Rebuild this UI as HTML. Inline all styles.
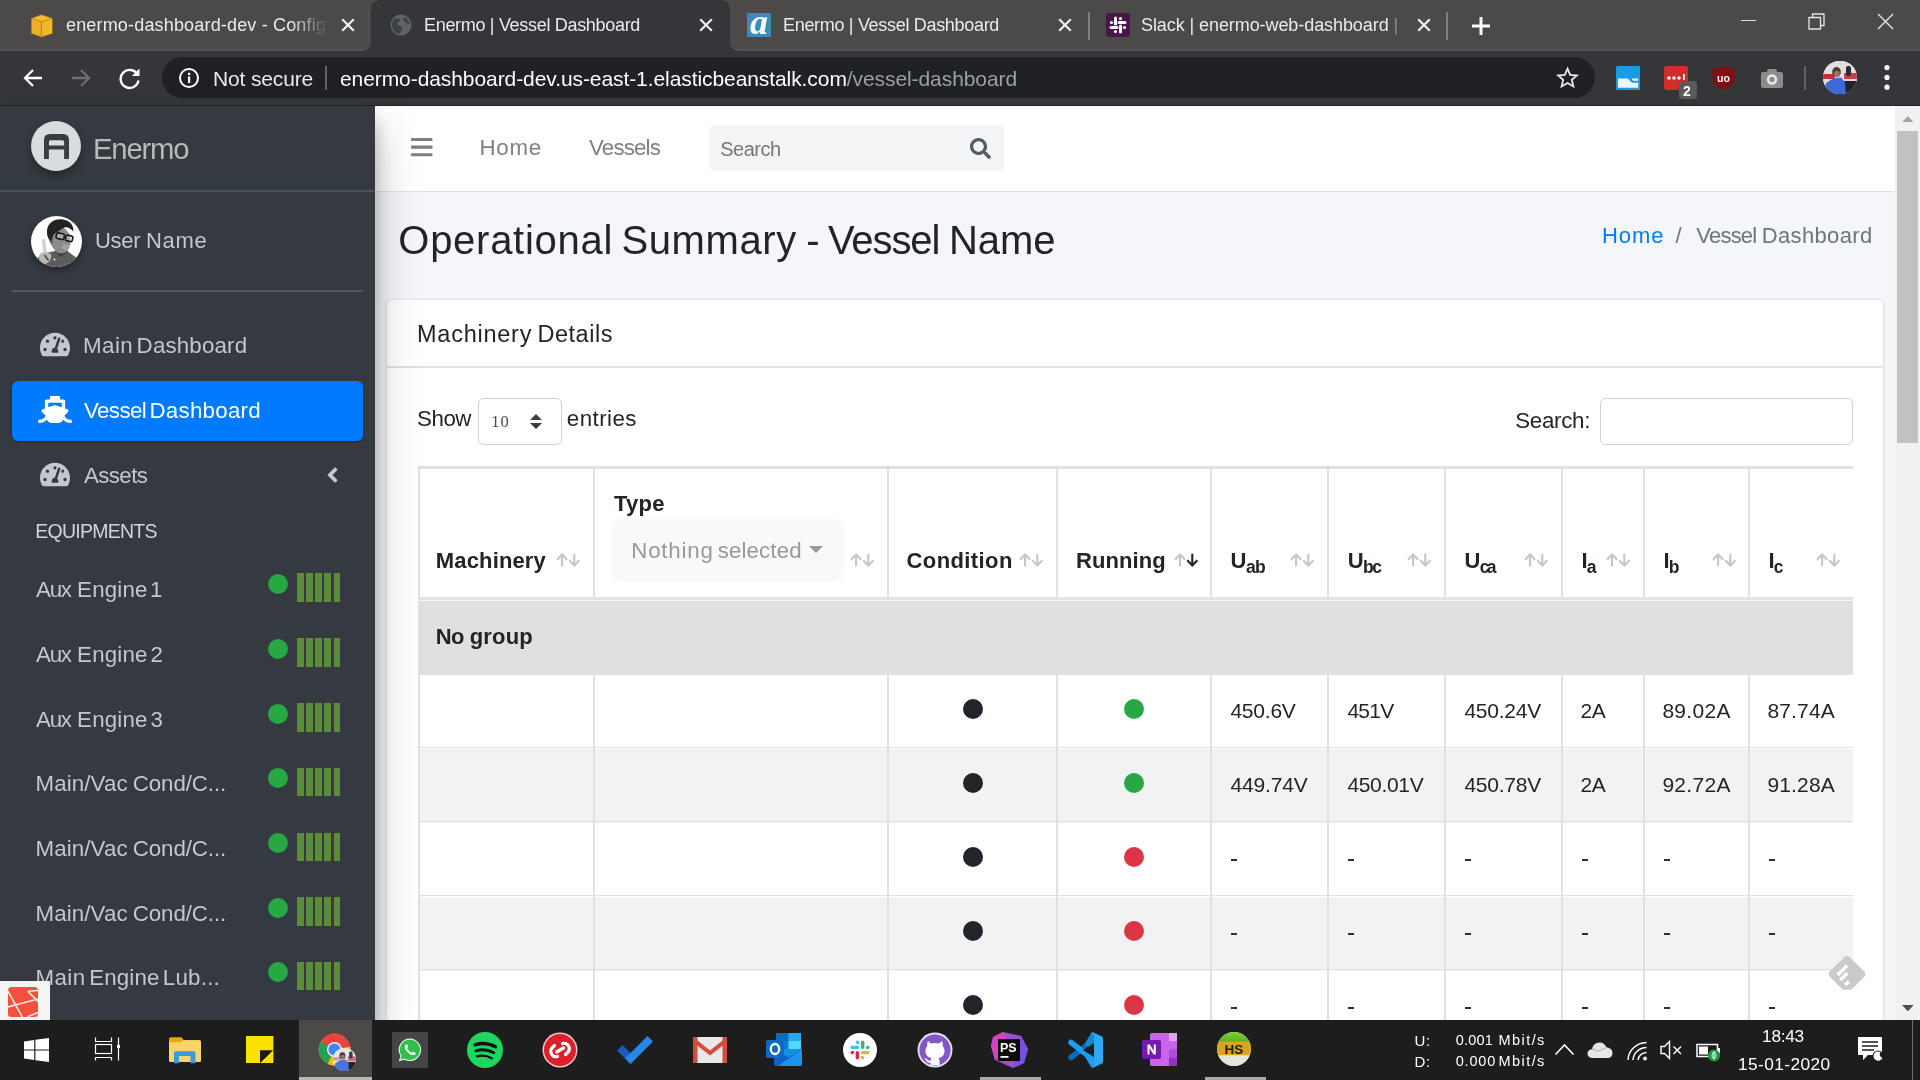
<!DOCTYPE html>
<html>
<head>
<meta charset="utf-8">
<title>Enermo | Vessel Dashboard</title>
<style>
*{box-sizing:border-box;margin:0;padding:0}
html,body{width:1920px;height:1080px;overflow:hidden;background:#f4f6f9;font-family:"Liberation Sans",sans-serif;}
#root{position:absolute;left:0;top:0;width:1920px;height:1080px;overflow:hidden;will-change:transform}
.abs{position:absolute}
.t{position:absolute;white-space:nowrap;line-height:1}
/* ===== Chrome ===== */
#tabbar{position:absolute;left:0;top:0;width:1920px;height:51px;background:#4c4a48}
#toolbar{position:absolute;left:0;top:51px;width:1920px;height:54px;background:#35363a}
#acttab{position:absolute;left:371.200px;top:0;width:358.700px;height:52px;background:#35363a;border-radius:9px 9px 0 0}
.tabt{color:#e8eaed;font-size:18px;top:15.700px}
#omni{position:absolute;left:162px;top:57px;width:1433px;height:41px;border-radius:21px;background:#202124}
/* ===== Page ===== */
#contentbg{position:absolute;left:375px;top:106px;width:1520px;height:914px;background:#f4f6f9}
#sidebar{position:absolute;left:0;top:106px;width:375px;height:914px;background:#343a40;box-shadow:0 21px 42px rgba(0,0,0,.25),0 15px 15px rgba(0,0,0,.22)}
#sbshadow{display:none}
#navbar{position:absolute;left:375px;top:106px;width:1520px;height:85.500px;background:#fff;border-bottom:1.500px solid #dee2e6}
#scroll{position:absolute;left:1895px;top:106px;width:25px;height:914px;background:#f1f1f1}
#card{position:absolute;left:387px;top:299.500px;width:1496.300px;height:740px;background:#fff;border-radius:5px;box-shadow:0 0 1.500px rgba(0,0,0,.11),0 1.500px 4px rgba(0,0,0,.14)}
/* ===== Taskbar ===== */
#taskbar{position:absolute;left:0;top:1020px;width:1920px;height:60px;background:#1d1d1d}
</style>
</head>
<body>
<div id="root">
<!-- CHROME -->
<div id="tabbar">
  <div id="tsline" class="abs" style="left:0;top:48.600px;width:1920px;height:2.400px;background:#555351"></div>
  <div class="abs" style="left:367.600px;top:12px;width:1.400px;height:28px;background:#565451"></div>
  <div id="acttab"></div>
  <div id="flareL" class="abs" style="left:362.200px;top:42px;width:9px;height:9px;background:radial-gradient(circle at 0 0,transparent 8.500px,#35363a 9.500px)"></div>
  <div id="flareR" class="abs" style="left:729.900px;top:42px;width:9px;height:9px;background:radial-gradient(circle at 100% 0,transparent 8.500px,#35363a 9.500px)"></div>
  <!-- tab1 -->
  <svg class="abs" style="left:31px;top:13.500px" width="22" height="24" viewBox="0 0 22 24"><path d="M.3 4.300 L10.500 .5 L21.500 4.300 V19.500 L10.500 23.300 L.3 19.500 Z" fill="#c48e12"/><path d="M.8 5 L10.500 8 V22.600 L.8 19.200 Z" fill="#ecb229"/><path d="M21 5 L10.500 8 V22.600 L21 19.200 Z" fill="#f0b62c"/><path d="M10.500 1.200 L20 4.300 L10.500 7 L1.500 4.300 Z" fill="#f5bd30"/><path d="M10.500 7.500 V23" stroke="#b98a16" stroke-width="1.300"/></svg>
  <div class="t tabt" style="left:66px;letter-spacing:.17px;width:262px;overflow:hidden;-webkit-mask-image:linear-gradient(90deg,#000 225px,transparent 262px)">enermo-dashboard-dev - Config</div>
  <svg class="abs" style="left:341px;top:18.300px" width="14" height="14" viewBox="0 0 14 14"><path d="M1.200 1.200 L12.800 12.800 M12.800 1.200 L1.200 12.800" stroke="#eceef0" stroke-width="2.300"/></svg>
  <!-- tab2 active -->
  <svg class="abs" style="left:390px;top:14px" width="22" height="22" viewBox="0 0 22 22"><circle cx="11" cy="11" r="10.5" fill="#5f6368"/><path d="M4 5 C6 4 9 4 10 6 C10 8 7 8 7 10 C8 12 11 11 12 14 C12 17 10 18 9 20 C5 19 2 15 2 11 C2 8 3 6 4 5 Z M14 3 C17 4 19 7 20 10 C18 11 17 10 16 8 C14 8 13 6 14 3 Z" fill="#3c4043"/></svg>
  <div class="t tabt" style="left:424px;letter-spacing:-.31px">Enermo | Vessel Dashboard</div>
  <svg class="abs" style="left:699px;top:18.300px" width="14" height="14" viewBox="0 0 14 14"><path d="M1.200 1.200 L12.800 12.800 M12.800 1.200 L1.200 12.800" stroke="#eceef0" stroke-width="2.300"/></svg>
  <!-- tab3 -->
  <div class="abs" style="left:747px;top:13px;width:24px;height:24px;background:#3d8ab8;border-radius:1px;overflow:hidden"><div class="t" style="left:3px;top:-9.500px;font-size:36px;font-weight:700;font-style:italic;color:#f4fbff;font-family:'Liberation Serif',serif">a</div></div>
  <div class="t tabt" style="left:783px;letter-spacing:-.31px">Enermo | Vessel Dashboard</div>
  <svg class="abs" style="left:1058px;top:18.300px" width="14" height="14" viewBox="0 0 14 14"><path d="M1.200 1.200 L12.800 12.800 M12.800 1.200 L1.200 12.800" stroke="#eceef0" stroke-width="2.300"/></svg>
  <div class="abs" style="left:1088px;top:12px;width:1.600px;height:28px;background:#807d7a"></div>
  <!-- tab4 -->
  <div class="abs" style="left:1106px;top:13px;width:24px;height:24px;background:#4a154b;border-radius:3px"></div>
  <svg class="abs" style="left:1108px;top:15px" width="20" height="20" viewBox="0 0 20 20"><g stroke="#fff" stroke-width="3" stroke-linecap="round"><path d="M7.5 3 V9"/><path d="M12.5 11 V17"/><path d="M3 12.5 H9"/><path d="M11 7.5 H17"/></g><g fill="#fff"><circle cx="3.5" cy="7.5" r="1.6"/><circle cx="16.5" cy="12.5" r="1.6"/><circle cx="12.5" cy="3.5" r="1.6"/><circle cx="7.5" cy="16.5" r="1.6"/></g></svg>
  <div class="t tabt" style="left:1141px;letter-spacing:-.08px">Slack | enermo-web-dashboard <span style="color:#8d8b89">|</span></div>
  <svg class="abs" style="left:1417px;top:18.300px" width="14" height="14" viewBox="0 0 14 14"><path d="M1.200 1.200 L12.800 12.800 M12.800 1.200 L1.200 12.800" stroke="#eceef0" stroke-width="2.300"/></svg>
  <div class="abs" style="left:1446px;top:12px;width:1.600px;height:28px;background:#807d7a"></div>
  <!-- new tab + -->
  <svg class="abs" style="left:1471px;top:16px" width="20" height="20" viewBox="0 0 20 20"><path d="M10 1 V19 M1 10 H19" stroke="#fff" stroke-width="3"/></svg>
  <!-- window controls -->
  <div class="abs" style="left:1741px;top:20px;width:15px;height:1.200px;background:#dcdcdc"></div>
  <svg class="abs" style="left:1808px;top:13px" width="17" height="17" viewBox="0 0 17 17"><path d="M1 4.5 H12.5 V16 H1 Z M4.5 4.5 V1 H16 V12.5 H12.5" fill="none" stroke="#e6e6e6" stroke-width="1.3"/></svg>
  <svg class="abs" style="left:1877px;top:13px" width="17" height="17" viewBox="0 0 17 17"><path d="M1 1 L16 16 M16 1 L1 16" stroke="#e6e6e6" stroke-width="1.4"/></svg>
</div>
<div id="toolbar"></div>
<div id="omni"></div>
<!-- nav buttons -->
<svg class="abs" style="left:22px;top:67px" width="22" height="22" viewBox="0 0 22 22"><path d="M20 11 H3.5 M11 3 L3 11 L11 19" fill="none" stroke="#fff" stroke-width="2.3"/></svg>
<svg class="abs" style="left:70px;top:67px" width="22" height="22" viewBox="0 0 22 22"><path d="M2 11 H18.5 M11 3 L19 11 L11 19" fill="none" stroke="#6d6f73" stroke-width="2.3"/></svg>
<svg class="abs" style="left:118px;top:66px" width="24" height="24" viewBox="0 0 24 24"><path d="M19.5 8.5 A9 9 0 1 0 20.5 14.5" fill="none" stroke="#fff" stroke-width="2.4"/><path d="M21.5 2.5 V10 H14 Z" fill="#fff"/></svg>
<!-- omnibox content -->
<svg class="abs" style="left:178px;top:67px" width="22" height="22" viewBox="0 0 22 22"><circle cx="11" cy="11" r="9" fill="none" stroke="#fff" stroke-width="2"/><rect x="10" y="9.5" width="2.2" height="6.5" fill="#fff"/><rect x="10" y="5.8" width="2.2" height="2.3" fill="#fff"/></svg>
<div class="t" style="left:213px;top:68px;font-size:21px;color:#e8eaed;letter-spacing:-.15px">Not secure</div>
<div class="abs" style="left:325px;top:66px;width:2px;height:24px;background:#5f6368"></div>
<div class="t" style="left:340px;top:68px;font-size:21px;color:#fff;letter-spacing:-.08px">enermo-dashboard-dev.us-east-1.elasticbeanstalk.com<span style="color:#9aa0a6">/vessel-dashboard</span></div>
<svg class="abs" style="left:1556px;top:66px" width="23" height="23" viewBox="0 0 24 24"><path d="M12 2.8 L14.8 9.3 L21.8 9.9 L16.5 14.5 L18.1 21.3 L12 17.7 L5.9 21.3 L7.5 14.5 L2.2 9.9 L9.2 9.3 Z" fill="none" stroke="#e8eaed" stroke-width="1.9" stroke-linejoin="miter"/></svg>
<!-- extensions -->
<svg class="abs" style="left:1615.800px;top:65.800px" width="24.200" height="24.200" viewBox="0 0 24.200 24.200"><rect width="24.200" height="24.200" rx="1.800" fill="#1c9be3"/><path d="M2 12.500 H11 C13.800 12.500 13.800 16.700 17 16.700 H22.200 V21.800 H2 Z" fill="#e8f7ff"/><path d="M15.500 12.500 H22.200 V14.800 H17.800 C16.500 14.800 16 13.500 15.500 12.500 Z" fill="#e8f7ff"/></svg>
<div class="abs" style="left:1664px;top:66px;width:24px;height:24px;background:#d32d27;border-radius:3px"></div>
<svg class="abs" style="left:1664px;top:66px" width="24" height="24" viewBox="0 0 24 24"><circle cx="5" cy="12" r="1.7" fill="#fff"/><circle cx="10" cy="12" r="1.7" fill="#fff"/><circle cx="15" cy="12" r="1.7" fill="#fff"/><rect x="19" y="8" width="1.8" height="6" fill="#fff"/></svg>
<div class="abs" style="left:1679px;top:81px;width:18px;height:18px;background:#5a5a5a;border-radius:3px"></div>
<div class="t" style="left:1683px;top:84px;font-size:14px;font-weight:700;color:#fff">2</div>
<svg class="abs" style="left:1711px;top:65px" width="25" height="26" viewBox="0 0 25 26"><path d="M12.5 1 C9 3 5 3.5 1.5 3.5 V13 C1.5 19 7 23 12.5 25 C18 23 23.500 19 23.500 13 V3.500 C20 3.500 16 3 12.5 1 Z" fill="#800f12"/><text x="12.5" y="16.500" font-family="Liberation Sans" font-size="10.5" font-weight="700" fill="#fff" text-anchor="middle">uo</text></svg>
<svg class="abs" style="left:1760px;top:67px" width="24" height="22" viewBox="0 0 24 22"><path d="M8 2 H16 L17.5 5 H21 C22.500 5 23 6 23 7 V19 C23 20.500 22 21 21 21 H3 C1.500 21 1 20 1 19 V7 C1 5.500 2 5 3 5 H6.500 Z" fill="#8c8c8c"/><circle cx="12" cy="12.500" r="5.200" fill="#e9e9e9"/><circle cx="12" cy="12.500" r="2.700" fill="#8c8c8c"/></svg>
<div class="abs" style="left:1804px;top:66px;width:2px;height:24px;background:#5f6368"></div>
<div class="abs" style="left:1823px;top:60.800px;width:33.700px;height:33.700px;border-radius:50%;overflow:hidden;background:#e6e0e3"><svg width="34" height="34" viewBox="0 0 34 34" style="position:absolute;left:0;top:0"><defs><filter id="pab"><feGaussianBlur stdDeviation=".7"/></filter></defs><g filter="url(#pab)"><rect x="0" y="0" width="34" height="34" fill="#e4dde0"/><rect x="0" y="13" width="12" height="5" fill="#c2323c"/><rect x="21" y="12" width="13" height="6" fill="#c4404a"/><rect x="23" y="5" width="5" height="10" rx="2" fill="#2d2c33"/><rect x="17" y="20" width="18" height="15" fill="#22232c"/><path d="M1 34 L3 22 L10 17.500 L18 16.500 L22 21 L23 34 Z" fill="#3c68d8"/><ellipse cx="13.500" cy="11" rx="4.300" ry="5" fill="#4a3a36"/><ellipse cx="13.800" cy="13" rx="3" ry="3.300" fill="#9a7565"/></g></svg></div>
<svg class="abs" style="left:1883px;top:64px" width="8" height="27" viewBox="0 0 8 27"><circle cx="4" cy="3.600" r="2.600" fill="#fff"/><circle cx="4" cy="13.400" r="2.600" fill="#fff"/><circle cx="4" cy="23.200" r="2.600" fill="#fff"/></svg>

<!-- PAGE -->
<div id="contentbg"></div>
<div id="navbar"></div>
<svg class="abs" style="left:411px;top:138px" width="21.500" height="18.500" viewBox="0 0 21.500 18.500"><g fill="#7f7f7f"><rect x="0" y="0" width="21.500" height="3.100" rx=".8"/><rect x="0" y="7.600" width="21.500" height="3.100" rx=".8"/><rect x="0" y="15.200" width="21.500" height="3.100" rx=".8"/></g></svg>
<div class="t" style="left:479.6px;top:136.7px;font-size:22.3px;font-weight:400;color:#808080;letter-spacing:0.67px;">Home</div>
<div class="t" style="left:589.0px;top:136.7px;font-size:22.3px;font-weight:400;color:#808080;letter-spacing:-0.83px;">Vessels</div>
<div class="abs" style="left:709px;top:125px;width:295px;height:45.500px;background:#f2f4f6;border-radius:6px"></div>
<div class="t" style="left:720.3px;top:139.1px;font-size:20px;font-weight:400;color:#777;letter-spacing:-0.52px;">Search</div>
<svg class="abs" style="left:970px;top:138px" width="21" height="21" viewBox="0 0 512 512"><path d="M505 442.7L405.3 343c-4.5-4.5-10.6-7-17-7H372c27.6-35.3 44-79.7 44-128C416 93.1 322.9 0 208 0S0 93.1 0 208s93.1 208 208 208c48.3 0 92.7-16.4 128-44v16.3c0 6.4 2.5 12.5 7 17l99.7 99.7c9.4 9.4 24.6 9.4 33.9 0l28.3-28.3c9.4-9.4 9.4-24.6.1-34zM208 336c-70.7 0-128-57.2-128-128 0-70.7 57.2-128 128-128 70.7 0 128 57.2 128 128 0 70.7-57.2 128-128 128z" fill="#555b61"/></svg>
<div class="t" style="left:398.3px;top:219.5px;font-size:40px;font-weight:400;color:#212529;letter-spacing:0.73px;">Operational</div>
<div class="t" style="left:621.4px;top:219.5px;font-size:40px;font-weight:400;color:#212529;letter-spacing:0.62px;">Summary</div>
<div class="t" style="left:806.2px;top:219.5px;font-size:40px;font-weight:400;color:#212529;letter-spacing:0px;">-</div>
<div class="t" style="left:828.0px;top:219.5px;font-size:40px;font-weight:400;color:#212529;letter-spacing:-1.1px;">Vessel</div>
<div class="t" style="left:949.0px;top:219.5px;font-size:40px;font-weight:400;color:#212529;letter-spacing:-0.07px;">Name</div>
<div class="t" style="left:1602.0px;top:224.7px;font-size:22px;font-weight:400;color:#007bff;letter-spacing:0.9px;">Home</div>
<div class="t" style="left:1675.6px;top:224.7px;font-size:22px;font-weight:400;color:#6c757d;letter-spacing:0px;">/</div>
<div class="t" style="left:1696.3px;top:224.7px;font-size:22px;font-weight:400;color:#6c757d;letter-spacing:-0.78px;">Vessel</div>
<div class="t" style="left:1761.8px;top:224.7px;font-size:22px;font-weight:400;color:#6c757d;letter-spacing:0.34px;">Dashboard</div>
<div id="card"></div>
<div class="abs" style="left:387px;top:366px;width:1496px;height:1.5px;background:#dfe1e4"></div>
<div class="t" style="left:417.0px;top:322.6px;font-size:23.5px;font-weight:400;color:#212529;letter-spacing:0.75px;">Machinery</div>
<div class="t" style="left:537.4px;top:322.6px;font-size:23.5px;font-weight:400;color:#212529;letter-spacing:0.53px;">Details</div>
<div class="t" style="left:417.1px;top:407.5px;font-size:22.3px;font-weight:400;color:#212529;letter-spacing:-0.47px;">Show</div>
<div class="abs" style="left:478.300px;top:398.200px;width:83.500px;height:46.500px;border:1.700px solid #ccd1d6;border-radius:5.500px;background:#fff"></div>
<div class="t" style="left:491.300px;top:414.200px;font-size:16.500px;color:#444b52;font-family:'Liberation Serif',serif;letter-spacing:1px">10</div>
<svg class="abs" style="left:530px;top:414px" width="12" height="15" viewBox="0 0 12 15"><path d="M6 0 L12 6 H0 Z M0 9.100 H12 L6 15 Z" fill="#3a3d40"/></svg>
<div class="t" style="left:566.8px;top:407.5px;font-size:22.3px;font-weight:400;color:#212529;letter-spacing:0.45px;">entries</div>
<div class="t" style="left:1515.2px;top:409.7px;font-size:22.3px;font-weight:400;color:#212529;letter-spacing:-0.28px;">Search:</div>
<div class="abs" style="left:1600.300px;top:398.200px;width:252.500px;height:46.500px;border:1.700px solid #ccd1d6;border-radius:5.500px;background:#fff"></div>
<div class="abs" id="tbl" style="left:418px;top:466px;width:1435px;height:554px;overflow:hidden">
<div class="abs" style="left:0px;top:0px;width:1435px;height:3px;background:#dee2e6;"></div>
<div class="abs" style="left:0px;top:131px;width:1435px;height:3px;background:#e1e4e7;"></div>
<div class="abs" style="left:0px;top:134px;width:1435px;height:1px;background:#f7f7f7;"></div>
<div class="abs" style="left:0px;top:135px;width:1435px;height:73.8px;background:#e0e0e0;"></div>
<div class="abs" style="left:0px;top:280.70000000000005px;width:1435px;height:1.8px;background:#dee2e6;"></div>
<div class="abs" style="left:0px;top:282.5px;width:1435px;height:74px;background:#f2f2f2;"></div>
<div class="abs" style="left:0px;top:354.70000000000005px;width:1435px;height:1.8px;background:#dee2e6;"></div>
<div class="abs" style="left:0px;top:428.70000000000005px;width:1435px;height:1.8px;background:#dee2e6;"></div>
<div class="abs" style="left:0px;top:430.5px;width:1435px;height:74px;background:#f2f2f2;"></div>
<div class="abs" style="left:0px;top:502.70000000000005px;width:1435px;height:1.8px;background:#dee2e6;"></div>
<div class="abs" style="left:0px;top:576.7px;width:1435px;height:1.8px;background:#dee2e6;"></div>
<div class="abs" style="left:0px;top:3px;width:1.9px;height:128px;background:#dfe2e5;"></div>
<div class="abs" style="left:0px;top:208.79999999999995px;width:1.9px;height:346px;background:#dfe2e5;"></div>
<div class="abs" style="left:175px;top:3px;width:1.9px;height:128px;background:#dfe2e5;"></div>
<div class="abs" style="left:175px;top:208.79999999999995px;width:1.9px;height:346px;background:#dfe2e5;"></div>
<div class="abs" style="left:469px;top:3px;width:1.9px;height:128px;background:#dfe2e5;"></div>
<div class="abs" style="left:469px;top:208.79999999999995px;width:1.9px;height:346px;background:#dfe2e5;"></div>
<div class="abs" style="left:638px;top:3px;width:1.9px;height:128px;background:#dfe2e5;"></div>
<div class="abs" style="left:638px;top:208.79999999999995px;width:1.9px;height:346px;background:#dfe2e5;"></div>
<div class="abs" style="left:792px;top:3px;width:1.9px;height:128px;background:#dfe2e5;"></div>
<div class="abs" style="left:792px;top:208.79999999999995px;width:1.9px;height:346px;background:#dfe2e5;"></div>
<div class="abs" style="left:909px;top:3px;width:1.9px;height:128px;background:#dfe2e5;"></div>
<div class="abs" style="left:909px;top:208.79999999999995px;width:1.9px;height:346px;background:#dfe2e5;"></div>
<div class="abs" style="left:1026px;top:3px;width:1.9px;height:128px;background:#dfe2e5;"></div>
<div class="abs" style="left:1026px;top:208.79999999999995px;width:1.9px;height:346px;background:#dfe2e5;"></div>
<div class="abs" style="left:1143px;top:3px;width:1.9px;height:128px;background:#dfe2e5;"></div>
<div class="abs" style="left:1143px;top:208.79999999999995px;width:1.9px;height:346px;background:#dfe2e5;"></div>
<div class="abs" style="left:1225px;top:3px;width:1.9px;height:128px;background:#dfe2e5;"></div>
<div class="abs" style="left:1225px;top:208.79999999999995px;width:1.9px;height:346px;background:#dfe2e5;"></div>
<div class="abs" style="left:1330px;top:3px;width:1.9px;height:128px;background:#dfe2e5;"></div>
<div class="abs" style="left:1330px;top:208.79999999999995px;width:1.9px;height:346px;background:#dfe2e5;"></div>
<div class="t" style="left:17.8px;top:84.1px;font-size:22px;font-weight:700;color:#212529;letter-spacing:0.15px;">Machinery</div>
<svg class="abs" style="left:138.0px;top:86.6px" width="25" height="14" viewBox="0 0 25 14"><path d="M6.100 13.300 V2 M1 6.700 L6.100 1.500 L11.200 6.700" fill="none" stroke="#c6c6c6" stroke-width="2.100"/><path d="M18.300 .7 V12 M13.200 7.300 L18.300 12.500 L23.400 7.300" fill="none" stroke="#c6c6c6" stroke-width="2.100"/></svg>
<div class="t" style="left:195.9px;top:27.1px;font-size:22px;font-weight:700;color:#212529;letter-spacing:0.27px;">Type</div>
<div class="abs" style="left:196px;top:55px;width:227px;height:58px;background:#f8f9fa;border-radius:5px;box-shadow:0 0 6px rgba(0,0,0,.06)"></div>
<div class="t" style="left:213.3px;top:74.1px;font-size:22.3px;font-weight:400;color:#999;letter-spacing:0.78px;">Nothing</div>
<div class="t" style="left:299.8px;top:74.1px;font-size:22.3px;font-weight:400;color:#999;letter-spacing:0.1px;">selected</div>
<svg class="abs" style="left:391px;top:80px" width="14" height="7" viewBox="0 0 14 7"><path d="M0 0 H14 L7 7 Z" fill="#999"/></svg>
<svg class="abs" style="left:432.0px;top:86.6px" width="25" height="14" viewBox="0 0 25 14"><path d="M6.100 13.300 V2 M1 6.700 L6.100 1.500 L11.200 6.700" fill="none" stroke="#c6c6c6" stroke-width="2.100"/><path d="M18.300 .7 V12 M13.200 7.300 L18.300 12.500 L23.400 7.300" fill="none" stroke="#c6c6c6" stroke-width="2.100"/></svg>
<div class="t" style="left:488.6px;top:84.1px;font-size:22px;font-weight:700;color:#212529;letter-spacing:0.39px;">Condition</div>
<svg class="abs" style="left:601.0px;top:86.6px" width="25" height="14" viewBox="0 0 25 14"><path d="M6.100 13.300 V2 M1 6.700 L6.100 1.500 L11.200 6.700" fill="none" stroke="#c6c6c6" stroke-width="2.100"/><path d="M18.300 .7 V12 M13.200 7.300 L18.300 12.500 L23.400 7.300" fill="none" stroke="#c6c6c6" stroke-width="2.100"/></svg>
<div class="t" style="left:658.0px;top:84.1px;font-size:22px;font-weight:700;color:#212529;letter-spacing:0.1px;">Running</div>
<svg class="abs" style="left:755.7px;top:86.6px" width="25" height="14" viewBox="0 0 25 14"><path d="M6.100 13.300 V2 M1 6.700 L6.100 1.500 L11.200 6.700" fill="none" stroke="#c6c6c6" stroke-width="2.100"/><path d="M18.300 .7 V12 M13.200 7.300 L18.300 12.500 L23.400 7.300" fill="none" stroke="#212529" stroke-width="2.100"/></svg>
<div class="t" style="left:812.6px;top:84.3px;font-size:22px;font-weight:700;color:#212529;letter-spacing:0px;">U</div>
<div class="t" style="left:827.9px;top:92.9px;font-size:17.5px;font-weight:700;color:#212529;letter-spacing:-0.6px;">ab</div>
<svg class="abs" style="left:871.7px;top:86.6px" width="25" height="14" viewBox="0 0 25 14"><path d="M6.100 13.300 V2 M1 6.700 L6.100 1.500 L11.200 6.700" fill="none" stroke="#c6c6c6" stroke-width="2.100"/><path d="M18.300 .7 V12 M13.200 7.300 L18.300 12.500 L23.400 7.300" fill="none" stroke="#c6c6c6" stroke-width="2.100"/></svg>
<div class="t" style="left:929.7px;top:84.3px;font-size:22px;font-weight:700;color:#212529;letter-spacing:0px;">U</div>
<div class="t" style="left:945.0px;top:92.9px;font-size:17.5px;font-weight:700;color:#212529;letter-spacing:-1.5px;">bc</div>
<svg class="abs" style="left:989.4px;top:86.6px" width="25" height="14" viewBox="0 0 25 14"><path d="M6.100 13.300 V2 M1 6.700 L6.100 1.500 L11.200 6.700" fill="none" stroke="#c6c6c6" stroke-width="2.100"/><path d="M18.300 .7 V12 M13.200 7.300 L18.300 12.500 L23.400 7.300" fill="none" stroke="#c6c6c6" stroke-width="2.100"/></svg>
<div class="t" style="left:1046.6px;top:84.3px;font-size:22px;font-weight:700;color:#212529;letter-spacing:0px;">U</div>
<div class="t" style="left:1061.7px;top:92.9px;font-size:17.5px;font-weight:700;color:#212529;letter-spacing:-2.7px;">ca</div>
<svg class="abs" style="left:1106.2px;top:86.6px" width="25" height="14" viewBox="0 0 25 14"><path d="M6.100 13.300 V2 M1 6.700 L6.100 1.500 L11.200 6.700" fill="none" stroke="#c6c6c6" stroke-width="2.100"/><path d="M18.300 .7 V12 M13.200 7.300 L18.300 12.500 L23.400 7.300" fill="none" stroke="#c6c6c6" stroke-width="2.100"/></svg>
<div class="t" style="left:1163.6px;top:84.3px;font-size:22px;font-weight:700;color:#212529;letter-spacing:0px;">I</div>
<div class="t" style="left:1168.8px;top:92.9px;font-size:17.5px;font-weight:700;color:#212529;letter-spacing:0px;">a</div>
<svg class="abs" style="left:1188.2px;top:86.6px" width="25" height="14" viewBox="0 0 25 14"><path d="M6.100 13.300 V2 M1 6.700 L6.100 1.500 L11.200 6.700" fill="none" stroke="#c6c6c6" stroke-width="2.100"/><path d="M18.300 .7 V12 M13.200 7.300 L18.300 12.500 L23.400 7.300" fill="none" stroke="#c6c6c6" stroke-width="2.100"/></svg>
<div class="t" style="left:1245.6px;top:84.3px;font-size:22px;font-weight:700;color:#212529;letter-spacing:0px;">I</div>
<div class="t" style="left:1250.8px;top:92.9px;font-size:17.5px;font-weight:700;color:#212529;letter-spacing:0px;">b</div>
<svg class="abs" style="left:1293.8px;top:86.6px" width="25" height="14" viewBox="0 0 25 14"><path d="M6.100 13.300 V2 M1 6.700 L6.100 1.500 L11.200 6.700" fill="none" stroke="#c6c6c6" stroke-width="2.100"/><path d="M18.300 .7 V12 M13.200 7.300 L18.300 12.500 L23.400 7.300" fill="none" stroke="#c6c6c6" stroke-width="2.100"/></svg>
<div class="t" style="left:1350.6px;top:84.3px;font-size:22px;font-weight:700;color:#212529;letter-spacing:0px;">I</div>
<div class="t" style="left:1355.8px;top:92.9px;font-size:17.5px;font-weight:700;color:#212529;letter-spacing:0px;">c</div>
<svg class="abs" style="left:1398.3px;top:86.6px" width="25" height="14" viewBox="0 0 25 14"><path d="M6.100 13.300 V2 M1 6.700 L6.100 1.500 L11.200 6.700" fill="none" stroke="#c6c6c6" stroke-width="2.100"/><path d="M18.300 .7 V12 M13.200 7.300 L18.300 12.500 L23.400 7.300" fill="none" stroke="#c6c6c6" stroke-width="2.100"/></svg>
<div class="t" style="left:17.8px;top:160.4px;font-size:22px;font-weight:700;color:#212529;letter-spacing:-0.7px;">No</div>
<div class="t" style="left:51.7px;top:160.4px;font-size:22px;font-weight:700;color:#212529;letter-spacing:0.2px;">group</div>
<div class="abs" style="left:545px;top:233.0px;width:20px;height:20px;border-radius:50%;background:#212529"></div>
<div class="abs" style="left:706px;top:233.0px;width:20px;height:20px;border-radius:50%;background:#28a745"></div>
<div class="t" style="left:812.4px;top:233.9px;font-size:21px;font-weight:400;color:#212529;letter-spacing:-0.22px;">450.6V</div>
<div class="t" style="left:929.4px;top:233.9px;font-size:21px;font-weight:400;color:#212529;letter-spacing:-0.7px;">451V</div>
<div class="t" style="left:1046.4px;top:233.9px;font-size:21px;font-weight:400;color:#212529;letter-spacing:-0.23px;">450.24V</div>
<div class="t" style="left:1162.4px;top:233.9px;font-size:21px;font-weight:400;color:#212529;letter-spacing:-0.3px;">2A</div>
<div class="t" style="left:1244.4px;top:233.9px;font-size:21px;font-weight:400;color:#212529;letter-spacing:0.3px;">89.02A</div>
<div class="t" style="left:1349.4px;top:233.9px;font-size:21px;font-weight:400;color:#212529;letter-spacing:0.18px;">87.74A</div>
<div class="abs" style="left:545px;top:307.0px;width:20px;height:20px;border-radius:50%;background:#212529"></div>
<div class="abs" style="left:706px;top:307.0px;width:20px;height:20px;border-radius:50%;background:#28a745"></div>
<div class="t" style="left:812.4px;top:307.9px;font-size:21px;font-weight:400;color:#212529;letter-spacing:-0.15px;">449.74V</div>
<div class="t" style="left:929.4px;top:307.9px;font-size:21px;font-weight:400;color:#212529;letter-spacing:-0.33px;">450.01V</div>
<div class="t" style="left:1046.4px;top:307.9px;font-size:21px;font-weight:400;color:#212529;letter-spacing:-0.23px;">450.78V</div>
<div class="t" style="left:1162.4px;top:307.9px;font-size:21px;font-weight:400;color:#212529;letter-spacing:-0.3px;">2A</div>
<div class="t" style="left:1244.4px;top:307.9px;font-size:21px;font-weight:400;color:#212529;letter-spacing:0.3px;">92.72A</div>
<div class="t" style="left:1349.4px;top:307.9px;font-size:21px;font-weight:400;color:#212529;letter-spacing:0.18px;">91.28A</div>
<div class="abs" style="left:545px;top:381.0px;width:20px;height:20px;border-radius:50%;background:#212529"></div>
<div class="abs" style="left:706px;top:381.0px;width:20px;height:20px;border-radius:50%;background:#dc3545"></div>
<div class="abs" style="left:813.2px;top:393.1px;width:5.800px;height:1.900px;background:#2c3034"></div>
<div class="abs" style="left:930.2px;top:393.1px;width:5.800px;height:1.900px;background:#2c3034"></div>
<div class="abs" style="left:1047.2px;top:393.1px;width:5.800px;height:1.900px;background:#2c3034"></div>
<div class="abs" style="left:1164.2px;top:393.1px;width:5.800px;height:1.900px;background:#2c3034"></div>
<div class="abs" style="left:1246.2px;top:393.1px;width:5.800px;height:1.900px;background:#2c3034"></div>
<div class="abs" style="left:1351.2px;top:393.1px;width:5.800px;height:1.900px;background:#2c3034"></div>
<div class="abs" style="left:545px;top:455.0px;width:20px;height:20px;border-radius:50%;background:#212529"></div>
<div class="abs" style="left:706px;top:455.0px;width:20px;height:20px;border-radius:50%;background:#dc3545"></div>
<div class="abs" style="left:813.2px;top:467.1px;width:5.800px;height:1.900px;background:#2c3034"></div>
<div class="abs" style="left:930.2px;top:467.1px;width:5.800px;height:1.900px;background:#2c3034"></div>
<div class="abs" style="left:1047.2px;top:467.1px;width:5.800px;height:1.900px;background:#2c3034"></div>
<div class="abs" style="left:1164.2px;top:467.1px;width:5.800px;height:1.900px;background:#2c3034"></div>
<div class="abs" style="left:1246.2px;top:467.1px;width:5.800px;height:1.900px;background:#2c3034"></div>
<div class="abs" style="left:1351.2px;top:467.1px;width:5.800px;height:1.900px;background:#2c3034"></div>
<div class="abs" style="left:545px;top:529.0px;width:20px;height:20px;border-radius:50%;background:#212529"></div>
<div class="abs" style="left:706px;top:529.0px;width:20px;height:20px;border-radius:50%;background:#dc3545"></div>
<div class="abs" style="left:813.2px;top:541.1px;width:5.800px;height:1.900px;background:#2c3034"></div>
<div class="abs" style="left:930.2px;top:541.1px;width:5.800px;height:1.900px;background:#2c3034"></div>
<div class="abs" style="left:1047.2px;top:541.1px;width:5.800px;height:1.900px;background:#2c3034"></div>
<div class="abs" style="left:1164.2px;top:541.1px;width:5.800px;height:1.900px;background:#2c3034"></div>
<div class="abs" style="left:1246.2px;top:541.1px;width:5.800px;height:1.900px;background:#2c3034"></div>
<div class="abs" style="left:1351.2px;top:541.1px;width:5.800px;height:1.900px;background:#2c3034"></div>
</div>
<div id="sidebar"></div>
<div class="abs" id="sbshadow"></div>
<div class="abs" style="left:31px;top:121px;width:50px;height:50px;border-radius:50%;background:#d9dcde;box-shadow:0 5px 8px rgba(0,0,0,.3)"></div>
<svg class="abs" style="left:43.500px;top:134px" width="25" height="25" viewBox="0 0 25 25"><path d="M0 25 V6 Q0 0 6 0 H19 Q25 0 25 6 V25 H20.100 V15.500 H4.900 V25 Z M4.900 11.500 H20.100 V7.700 Q20.100 6.200 18.500 6.200 H6.500 Q4.900 6.200 4.900 7.700 Z" fill="#3a3d40" fill-rule="evenodd"/></svg>
<div class="t" style="left:93.0px;top:134.2px;font-size:29.3px;font-weight:400;color:#b6babf;letter-spacing:-1.2px;">Enermo</div>
<div class="abs" style="left:0;top:190px;width:375px;height:1.5px;background:#4b545c"></div>
<div class="abs" id="avatar" style="left:31px;top:215.700px;width:51px;height:51px;border-radius:50%;background:#fdfdfd;box-shadow:0 4px 7px rgba(0,0,0,.3);overflow:hidden"><svg width="51" height="51" viewBox="0 0 51 51" style="position:absolute;left:0;top:0"><defs><filter id="avb" x="-10%" y="-10%" width="120%" height="120%"><feGaussianBlur stdDeviation=".55"/></filter></defs><g filter="url(#avb)"><path d="M2 45 L13 37.500 L24 35 L33 32.500 L45 41.500 L49 52 H2 Z" fill="#5c5c5c"/><path d="M24 33 L33 31 L37 36 L29 41 Z" fill="#3a3a3a"/><ellipse cx="29.500" cy="24" rx="10" ry="13.500" transform="rotate(-10 29.500 24)" fill="#8b8b8b"/><path d="M17.500 14 C16.500 20 18 26 21 29 L22.500 20 Z" fill="#5a5a5a"/><path d="M33 27 C35 29 37 29.500 38.500 28.500 L37 34 C34 35 31.500 33 30.500 31 Z" fill="#a2a2a2"/><path d="M16.200 19 C14.500 9 21 2.800 30.500 3.300 C38 3.800 43 8.500 42.300 15.500 C40 12.500 36.500 10.800 33.500 11.500 C30.500 12.300 28.500 15 26 16.300 C23 17.500 21 20 20.500 25 C18 23.500 16.600 21.500 16.200 19 Z" fill="#242424"/><g fill="rgba(235,235,235,.35)" stroke="#1b1b1b" stroke-width="1.700"><rect x="25.300" y="17.300" width="8" height="5.600" rx="1.500" transform="rotate(13 29 20)"/><rect x="34.700" y="19.500" width="7" height="5.600" rx="1.500" transform="rotate(13 38 22)"/></g><rect x="11.600" y="23" width="3.500" height="16" rx="1.700" transform="rotate(-7 13.300 31)" fill="#d2d2d2"/><path d="M8 41 C8 36.500 12 35.500 15.500 36.500 L20 38 C21 42 18.500 47.500 14 48 C10 48 8 45 8 41 Z" fill="#b8b8b8"/><path d="M13.500 39 L17.500 44.500" stroke="#4a4a4a" stroke-width="1.600"/><circle cx="23.500" cy="43.500" r="1" fill="#e8e8e8"/></g></svg></div>
<div class="t" style="left:95.0px;top:229.8px;font-size:22px;font-weight:400;color:#c2c7d0;letter-spacing:-0.33px;">User</div>
<div class="t" style="left:146.0px;top:229.8px;font-size:22px;font-weight:400;color:#c2c7d0;letter-spacing:0.67px;">Name</div>
<div class="abs" style="left:12px;top:290px;width:351px;height:1.5px;background:#4f5962"></div>
<svg class="abs" style="left:40px;top:331px" width="30" height="27" viewBox="0 0 576 512"><path d="M288 32C128.94 32 0 160.94 0 320c0 52.8 14.25 102.26 39.06 144.8 5.61 9.62 16.3 15.2 27.44 15.2h443c11.14 0 21.83-5.58 27.44-15.2C561.75 422.26 576 372.8 576 320c0-159.06-128.94-288-288-288zm0 64c14.71 0 26.58 10.13 30.32 23.65-1.11 2.26-2.64 4.23-3.45 6.67l-9.22 27.67c-5.13 3.49-10.97 6.01-17.64 6.01-17.67 0-32-14.33-32-32S270.33 96 288 96zM96 384c-17.67 0-32-14.33-32-32s14.33-32 32-32 32 14.33 32 32-14.33 32-32 32zm48-160c-17.67 0-32-14.33-32-32s14.33-32 32-32 32 14.33 32 32-14.33 32-32 32zm246.77-72.41l-61.33 184C343.13 347.33 352 364.54 352 384c0 11.72-3.38 22.55-8.88 32H232.88c-5.5-9.45-8.88-20.28-8.88-32 0-33.94 26.5-61.43 59.9-63.59l61.34-184.01c4.17-12.56 17.73-19.45 30.36-15.17 12.57 4.19 19.35 17.79 15.17 30.36zm14.66 57.2l15.52-46.55c3.47-1.29 7.13-2.23 11.05-2.23 17.67 0 32 14.33 32 32s-14.33 32-32 32c-11.38-.01-20.89-6.28-26.57-15.22zM480 384c-17.67 0-32-14.33-32-32s14.33-32 32-32 32 14.33 32 32-14.33 32-32 32z" fill="#c2c7d0"/></svg>
<div class="t" style="left:83.0px;top:335.1px;font-size:22.3px;font-weight:400;color:#c2c7d0;letter-spacing:0.47px;">Main</div>
<div class="t" style="left:136.6px;top:335.1px;font-size:22.3px;font-weight:400;color:#c2c7d0;letter-spacing:0.18px;">Dashboard</div>
<div class="abs" style="left:12px;top:381px;width:351px;height:60px;border-radius:6px;background:#007bff;box-shadow:0 1px 3px rgba(0,0,0,.12),0 1px 2px rgba(0,0,0,.24)"></div>
<svg class="abs" style="left:38px;top:396px" width="34" height="27" viewBox="0 0 640 512"><path d="M496.616 372.639l70.012-70.012c16.899-16.9 9.942-45.771-12.836-53.092L512 236.102V96c0-17.673-14.327-32-32-32h-64V24c0-13.255-10.745-24-24-24H248c-13.255 0-24 10.745-24 24v40h-64c-17.673 0-32 14.327-32 32v140.102l-41.792 13.433c-22.753 7.313-29.754 36.173-12.836 53.092l70.012 70.012C125.828 416.287 85.587 448 24 448c-13.255 0-24 10.745-24 24v16c0 13.255 10.745 24 24 24 61.023 0 107.499-20.61 143.258-59.396C181.677 487.432 216.021 512 256 512h128c39.979 0 74.323-24.568 88.742-59.396C508.495 491.384 554.968 512 616 512c13.255 0 24-10.745 24-24v-16c0-13.255-10.745-24-24-24-60.817 0-101.542-31.001-119.384-75.361zM192 128h256v87.531l-118.208-37.995a31.995 31.995 0 0 0-19.584 0L192 215.531V128z" fill="#fff"/></svg>
<div class="t" style="left:84.0px;top:400.1px;font-size:22.3px;font-weight:400;color:#fff;letter-spacing:-0.6px;">Vessel</div>
<div class="t" style="left:149.4px;top:400.1px;font-size:22.3px;font-weight:400;color:#fff;letter-spacing:0.28px;">Dashboard</div>
<svg class="abs" style="left:40px;top:461px" width="30" height="27" viewBox="0 0 576 512"><path d="M288 32C128.94 32 0 160.94 0 320c0 52.8 14.25 102.26 39.06 144.8 5.61 9.62 16.3 15.2 27.44 15.2h443c11.14 0 21.83-5.58 27.44-15.2C561.75 422.26 576 372.8 576 320c0-159.06-128.94-288-288-288zm0 64c14.71 0 26.58 10.13 30.32 23.65-1.11 2.26-2.64 4.23-3.45 6.67l-9.22 27.67c-5.13 3.49-10.97 6.01-17.64 6.01-17.67 0-32-14.33-32-32S270.33 96 288 96zM96 384c-17.67 0-32-14.33-32-32s14.33-32 32-32 32 14.33 32 32-14.33 32-32 32zm48-160c-17.67 0-32-14.33-32-32s14.33-32 32-32 32 14.33 32 32-14.33 32-32 32zm246.77-72.41l-61.33 184C343.13 347.33 352 364.54 352 384c0 11.72-3.38 22.55-8.88 32H232.88c-5.5-9.45-8.88-20.28-8.88-32 0-33.94 26.5-61.43 59.9-63.59l61.34-184.01c4.17-12.56 17.73-19.45 30.36-15.17 12.57 4.19 19.35 17.79 15.17 30.36zm14.66 57.2l15.52-46.55c3.47-1.29 7.13-2.23 11.05-2.23 17.67 0 32 14.33 32 32s-14.33 32-32 32c-11.38-.01-20.89-6.28-26.57-15.22zM480 384c-17.67 0-32-14.33-32-32s14.33-32 32-32 32 14.33 32 32-14.33 32-32 32z" fill="#c2c7d0"/></svg>
<div class="t" style="left:84.0px;top:464.7px;font-size:22.3px;font-weight:400;color:#c2c7d0;letter-spacing:-0.6px;">Assets</div>
<svg class="abs" style="left:326px;top:463px" width="13" height="24" viewBox="0 0 256 512"><path d="M31.7 239l136-136c9.4-9.4 24.6-9.4 33.9 0l22.6 22.6c9.4 9.4 9.4 24.6 0 33.9L127.9 256l96.4 96.4c9.4 9.4 9.4 24.6 0 33.9L201.7 409c-9.4 9.4-24.6 9.4-33.9 0l-136-136c-9.5-9.4-9.5-24.6-.1-34z" fill="#c2c7d0"/></svg>
<div class="t" style="left:35.3px;top:522.3px;font-size:19.5px;font-weight:400;color:#d0d4da;letter-spacing:-0.76px;">EQUIPMENTS</div>
<div class="t" style="left:36.0px;top:578.8px;font-size:22.3px;font-weight:400;color:#c2c7d0;letter-spacing:-1.2px;">Aux</div>
<div class="t" style="left:77.1px;top:578.8px;font-size:22.3px;font-weight:400;color:#c2c7d0;letter-spacing:0.18px;">Engine</div>
<div class="t" style="left:150.1px;top:578.8px;font-size:22.3px;font-weight:400;color:#c2c7d0;letter-spacing:0px;">1</div>
<div class="abs" style="left:268.200px;top:573.7px;width:20px;height:20px;border-radius:50%;background:#28a745"></div>
<div class="abs" style="left:296.500px;top:573.2px;width:43px;height:28.700px;background:repeating-linear-gradient(90deg,#5b8c3a 0 6.500px,transparent 6.500px 9.130px)"></div>
<div class="t" style="left:36.0px;top:643.7px;font-size:22.3px;font-weight:400;color:#c2c7d0;letter-spacing:-1.2px;">Aux</div>
<div class="t" style="left:77.1px;top:643.7px;font-size:22.3px;font-weight:400;color:#c2c7d0;letter-spacing:0.18px;">Engine</div>
<div class="t" style="left:150.6px;top:643.7px;font-size:22.3px;font-weight:400;color:#c2c7d0;letter-spacing:0px;">2</div>
<div class="abs" style="left:268.200px;top:638.6px;width:20px;height:20px;border-radius:50%;background:#28a745"></div>
<div class="abs" style="left:296.500px;top:638.1px;width:43px;height:28.700px;background:repeating-linear-gradient(90deg,#5b8c3a 0 6.500px,transparent 6.500px 9.130px)"></div>
<div class="t" style="left:36.0px;top:708.6px;font-size:22.3px;font-weight:400;color:#c2c7d0;letter-spacing:-1.2px;">Aux</div>
<div class="t" style="left:77.1px;top:708.6px;font-size:22.3px;font-weight:400;color:#c2c7d0;letter-spacing:0.18px;">Engine</div>
<div class="t" style="left:150.6px;top:708.6px;font-size:22.3px;font-weight:400;color:#c2c7d0;letter-spacing:0px;">3</div>
<div class="abs" style="left:268.200px;top:703.5px;width:20px;height:20px;border-radius:50%;background:#28a745"></div>
<div class="abs" style="left:296.500px;top:703.0px;width:43px;height:28.700px;background:repeating-linear-gradient(90deg,#5b8c3a 0 6.500px,transparent 6.500px 9.130px)"></div>
<div class="t" style="left:35.6px;top:773.4px;font-size:22.3px;font-weight:400;color:#c2c7d0;letter-spacing:0.1px;">Main/Vac</div>
<div class="t" style="left:132.8px;top:773.4px;font-size:22.3px;font-weight:400;color:#c2c7d0;letter-spacing:-0.09px;">Cond/C...</div>
<div class="abs" style="left:268.200px;top:768.3px;width:20px;height:20px;border-radius:50%;background:#28a745"></div>
<div class="abs" style="left:296.500px;top:767.8px;width:43px;height:28.700px;background:repeating-linear-gradient(90deg,#5b8c3a 0 6.500px,transparent 6.500px 9.130px)"></div>
<div class="t" style="left:35.6px;top:838.1px;font-size:22.3px;font-weight:400;color:#c2c7d0;letter-spacing:0.1px;">Main/Vac</div>
<div class="t" style="left:132.8px;top:838.1px;font-size:22.3px;font-weight:400;color:#c2c7d0;letter-spacing:-0.09px;">Cond/C...</div>
<div class="abs" style="left:268.200px;top:833.0px;width:20px;height:20px;border-radius:50%;background:#28a745"></div>
<div class="abs" style="left:296.500px;top:832.5px;width:43px;height:28.700px;background:repeating-linear-gradient(90deg,#5b8c3a 0 6.500px,transparent 6.500px 9.130px)"></div>
<div class="t" style="left:35.6px;top:902.7px;font-size:22.3px;font-weight:400;color:#c2c7d0;letter-spacing:0.1px;">Main/Vac</div>
<div class="t" style="left:132.8px;top:902.7px;font-size:22.3px;font-weight:400;color:#c2c7d0;letter-spacing:-0.09px;">Cond/C...</div>
<div class="abs" style="left:268.200px;top:897.6px;width:20px;height:20px;border-radius:50%;background:#28a745"></div>
<div class="abs" style="left:296.500px;top:897.1px;width:43px;height:28.700px;background:repeating-linear-gradient(90deg,#5b8c3a 0 6.500px,transparent 6.500px 9.130px)"></div>
<div class="t" style="left:35.6px;top:967.4px;font-size:22.3px;font-weight:400;color:#c2c7d0;letter-spacing:0.4px;">Main</div>
<div class="t" style="left:89.2px;top:967.4px;font-size:22.3px;font-weight:400;color:#c2c7d0;letter-spacing:0.16px;">Engine</div>
<div class="t" style="left:162.8px;top:967.4px;font-size:22.3px;font-weight:400;color:#c2c7d0;letter-spacing:0.24px;">Lub...</div>
<div class="abs" style="left:268.200px;top:962.2px;width:20px;height:20px;border-radius:50%;background:#28a745"></div>
<div class="abs" style="left:296.500px;top:961.8px;width:43px;height:28.700px;background:repeating-linear-gradient(90deg,#5b8c3a 0 6.500px,transparent 6.500px 9.130px)"></div>
<div class="abs" style="left:0;top:981px;width:50px;height:39px;background:#f5f5f5"></div>
<svg class="abs" style="left:8px;top:987px" width="30" height="30" viewBox="0 0 30 30"><defs><clipPath id="lvc"><rect width="30" height="30" rx="3.500"/></clipPath></defs><g clip-path="url(#lvc)"><rect width="30" height="30" fill="#f4503b"/><g stroke="#fde9e4" stroke-width="1.600" fill="none"><path d="M-1 2.500 L14.600 30.500"/><path d="M0 19.900 L30.500 11.900"/><path d="M19.800 4.200 L30.500 15"/><path d="M19.800 4.200 L30.500 3.500"/><path d="M19.500 29.700 L30.500 25.500"/></g></g></svg>
<div id="scroll"></div>
<div class="abs" style="left:0;top:105px;width:1920px;height:1px;background:#1f2023"></div>
<div class="abs" style="left:1897px;top:131px;width:21px;height:312px;background:#c1c1c1"></div>
<svg class="abs" style="left:1901.700px;top:115.700px" width="11.700" height="6.300" viewBox="0 0 11.700 6.300"><path d="M0 6.300 L5.850 0 L11.700 6.300 Z" fill="#a3a3a3"/></svg>
<svg class="abs" style="left:1901.700px;top:1004.900px" width="11.700" height="6.300" viewBox="0 0 11.700 6.300"><path d="M0 0 L5.850 6.300 L11.700 0 Z" fill="#505050"/></svg>
<svg class="abs" style="left:1828px;top:956px" width="38" height="36" viewBox="0 0 38 36"><defs><clipPath id="fwc"><rect x="0" y="0" width="38" height="33.800"/></clipPath></defs><g clip-path="url(#fwc)"><rect x="5" y="4.200" width="28" height="28" rx="4" transform="rotate(45 19 18.200)" fill="#cacaca"/></g><g stroke="#fff" stroke-width="3.300" stroke-linecap="butt"><path d="M9.700 19 L19.100 9.600"/><path d="M12.400 24 L19.400 17"/><path d="M17.200 29 L20.800 25.400"/></g></svg>

<!-- TASKBAR -->
<div id="taskbar"></div>
<svg class="abs" style="left:24px;top:1038px" width="25" height="24" viewBox="0 0 25 24"><path d="M0 3.400 L10.200 2 V11.400 H0 Z M11.400 1.800 L25 0 V11.400 H11.400 Z M0 12.600 H10.200 V22 L0 20.600 Z M11.400 12.600 H25 V24 L11.400 22.200 Z" fill="#fff"/></svg>
<svg class="abs" style="left:94px;top:1036px" width="28" height="26" viewBox="0 0 28 26"><g fill="none" stroke="#fff" stroke-width="1.200"><path d="M1.500 1.500 V5.500 H17.500 V1.500"/><rect x="1.500" y="8.500" width="16" height="9"/><path d="M1.500 24.500 V21.500 H17.500 V24.500"/><path d="M24.500 1.500 V24.500"/></g><rect x="23" y="9" width="3" height="3" fill="#fff"/></svg>
<svg class="abs" style="left:169px;top:1036.500px" width="32" height="27" viewBox="0 0 32 27"><path d="M0 2.500 C0 1 1 .3 2 .3 H11.500 C12.500 .3 13 .8 13.500 1.500 L14.500 3 H30 C31.300 3 32 3.800 32 5 V24 H0 Z" fill="#e6a817"/><path d="M0 5.300 H12 L14.500 3.200 H30 C31.300 3.200 32 4 32 5 V23.500 C32 24.500 31.400 25 30.500 25 H1.500 C.6 25 0 24.500 0 23.500 Z" fill="#f9d469"/><path d="M5 26.300 V16.300 C5 15 5.800 14.300 7 14.300 H24.500 C25.700 14.300 26.500 15 26.500 16.300 V26.300 H21.500 V19 H10 V26.300 Z" fill="#3a9be0"/></svg>
<svg class="abs" style="left:246.200px;top:1036px" width="27.400" height="27.400" viewBox="0 0 27.400 27.400"><rect width="27.400" height="27.400" fill="#fce100"/><path d="M14 14.300 H27.200 L14 27.200 Z" fill="#1a1a1a"/></svg>
<div class="abs" style="left:299px;top:1020px;width:73px;height:60px;background:#4b4a47"></div>
<div class="abs" style="left:299px;top:1077px;width:73px;height:3px;background:#b8b8b5"></div>
<svg class="abs" style="left:318px;top:1033px" width="33" height="33" viewBox="0 0 32 32"><circle cx="16" cy="16" r="15.500" fill="#ea4335"/><path d="M16 16 L2.600 8.200 A15.500 15.500 0 0 0 9.500 30 Z" fill="#23a455"/><path d="M16 16 L9.500 30 A15.500 15.500 0 0 0 31.300 13 H16 Z" fill="#fbbc05"/><path d="M16 16 L31.300 13 A15.500 15.500 0 0 0 2.600 8.200 Z" fill="#e8453c"/><circle cx="16" cy="16" r="7.300" fill="#f1f1f1"/><circle cx="16" cy="16" r="5.900" fill="#4285f4"/></svg>
<div class="abs" style="left:332.600px;top:1047.500px;width:23.800px;height:23.800px;border-radius:50%;overflow:hidden;background:#e6e0e3"><svg width="23.800" height="23.800" viewBox="0 0 34 34" style="position:absolute;left:0;top:0"><defs><filter id="pab2"><feGaussianBlur stdDeviation="1"/></filter></defs><g filter="url(#pab2)"><rect x="-2" y="-2" width="38" height="38" fill="#e9e3e6"/><rect x="-2" y="13" width="13" height="5" fill="#c9a0a8"/><rect x="21" y="12" width="15" height="7" fill="#d06a7a"/><rect x="23" y="5" width="5" height="10" rx="2" fill="#3d3c44"/><rect x="17" y="20" width="20" height="17" fill="#22232c"/><path d="M-1 36 L3 22 L10 17.500 L18 16.500 L22 21 L23 36 Z" fill="#4a72dc"/><ellipse cx="13.500" cy="11" rx="4.300" ry="5" fill="#4a3a36"/><ellipse cx="13.800" cy="13" rx="3" ry="3.300" fill="#9a7565"/></g></svg></div>
<div class="abs" style="left:392px;top:1032px;width:36px;height:36px;background:#454545"></div>
<svg class="abs" style="left:398px;top:1038px" width="24" height="24" viewBox="0 0 24 24"><path d="M12 .5 A11.300 11.300 0 0 0 2.400 17.800 L.8 23.200 L6.400 21.700 A11.300 11.300 0 1 0 12 .5 Z" fill="#d9f5dd"/><path d="M12 1.700 A10.100 10.100 0 0 0 3.600 17.500 L2.500 21.500 L6.600 20.400 A10.100 10.100 0 1 0 12 1.700 Z" fill="#2fbf4a"/><path d="M8.500 6.300 C7.700 6.300 6.800 7.300 6.800 8.700 C6.800 12.200 11.700 17.100 15.200 17.100 C16.600 17.100 17.700 16.200 17.700 15.400 C17.700 14.700 15.700 13.700 15.200 13.700 C14.700 13.700 14.400 14.700 13.900 14.700 C12.700 14.700 9.200 11.200 9.200 10 C9.200 9.500 10.200 9.200 10.200 8.700 C10.200 8.200 9.200 6.300 8.500 6.300 Z" fill="#fff"/></svg>
<svg class="abs" style="left:467px;top:1032px" width="36" height="36" viewBox="0 0 36 36"><circle cx="18" cy="18" r="18" fill="#1ed760"/><g fill="none" stroke="#111" stroke-linecap="round"><path d="M8 12.800 C14.500 10.800 22.500 11.400 28.500 14.800" stroke-width="3.400"/><path d="M9 18.800 C14.500 17.200 21.500 17.800 26.800 20.800" stroke-width="2.900"/><path d="M10 24.300 C14.500 23.100 20 23.500 24.800 26.200" stroke-width="2.400"/></g></svg>
<svg class="abs" style="left:542px;top:1032px" width="36" height="36" viewBox="0 0 36 36"><circle cx="18" cy="18" r="17.500" fill="#f4c6c8"/><circle cx="18" cy="18" r="16" fill="#de1f2b"/><g fill="none" stroke="#fff" stroke-width="3.200" stroke-linecap="round"><path d="M20.500 11.500 A5.300 5.300 0 0 1 25.500 20.500 L23.500 22.500"/><path d="M15.500 24.500 A5.300 5.300 0 0 1 10.500 15.500 L12.500 13.500"/><path d="M14.500 20 L21.500 16"/></g></svg>
<svg class="abs" style="left:617px;top:1035px" width="36" height="29" viewBox="0 0 36 29"><path d="M0 15.500 L5.500 10 L19 23.500 L13.500 29 Z" fill="#195abd"/><path d="M13.500 29 L8 23.500 L30.500 1 L36 6.500 Z" fill="#2987e6"/></svg>
<svg class="abs" style="left:693px;top:1037px" width="34" height="26" viewBox="0 0 34 26"><rect x="0" y="0" width="34" height="26" rx="2" fill="#e8e8e8"/><path d="M0 2 C0 .8 .8 0 2 0 H4.500 V26 H2 C.8 26 0 25.200 0 24 Z" fill="#d54b3d"/><path d="M34 2 C34 .8 33.200 0 32 0 H29.500 V26 H32 C33.200 26 34 25.200 34 24 Z" fill="#d54b3d"/><path d="M1 .8 L17 13.500 L33 .8 L33 6 L17 18.500 L1 6 Z" fill="#d54b3d"/></svg>
<svg class="abs" style="left:766px;top:1033px" width="36" height="33" viewBox="0 0 36 33"><rect x="10" y="0" width="25" height="24" rx="1.500" fill="#1490df"/><rect x="10" y="0" width="12.500" height="8" fill="#0f6cbd"/><rect x="22.500" y="0" width="12.500" height="8" fill="#28a8ea"/><rect x="10" y="8" width="12.500" height="8" fill="#0f78d4"/><rect x="22.500" y="8" width="12.500" height="8" fill="#50d9ff"/><path d="M8 16 L22 24.500 L36 16 V31 C36 32 35 33 34 33 H10 C9 33 8 32 8 31 Z" fill="#0a63c9"/><path d="M36 16 V31 C36 32 35 33 34 33 H12 Z" fill="#1b93eb"/><rect x="0" y="7" width="18" height="18" rx="1.800" fill="#0f6cbd"/><ellipse cx="9" cy="16" rx="4.200" ry="5" fill="none" stroke="#fff" stroke-width="2.300"/></svg>
<svg class="abs" style="left:843px;top:1033px" width="34" height="34" viewBox="0 0 34 34"><circle cx="17" cy="17" r="17" fill="#fff"/><g transform="translate(7.500 7.500) scale(.95)"><rect x="0" y="5.400" width="9" height="3.600" rx="1.800" fill="#36c5f0"/><path d="M5.400 1.800 A1.800 1.800 0 0 1 9 1.800 V3.600 H7.200 A1.800 1.800 0 0 1 5.400 1.800 Z" fill="#36c5f0"/><rect x="11" y="0" width="3.600" height="9" rx="1.800" fill="#2eb67d"/><path d="M18.200 5.400 A1.800 1.800 0 0 1 18.200 9 H16.400 V7.200 A1.800 1.800 0 0 1 18.200 5.400 Z" fill="#2eb67d"/><rect x="11" y="11" width="9" height="3.600" rx="1.800" fill="#ecb22e"/><path d="M14.600 18.200 A1.800 1.800 0 0 1 11 18.200 V16.400 H12.800 A1.800 1.800 0 0 1 14.600 18.200 Z" fill="#ecb22e"/><rect x="5.400" y="11" width="3.600" height="9" rx="1.800" fill="#e01e5a"/><path d="M1.800 14.600 A1.800 1.800 0 0 1 1.800 11 H3.600 V12.800 A1.800 1.800 0 0 1 1.800 14.600 Z" fill="#e01e5a"/></g></svg>
<svg class="abs" style="left:917px;top:1032px" width="36" height="36" viewBox="0 0 36 36"><circle cx="18" cy="18" r="17.500" fill="#e9def5"/><circle cx="18" cy="18" r="15.600" fill="#8257c6"/><path d="M11 9 L14 11.500 C16.500 10.800 19.500 10.800 22 11.500 L25 9 C26 11 26 12.500 25.600 13.800 C27 15.300 27.500 17 27.500 19 C27.500 24 24 25.500 21.500 26 C22.300 27 22.500 28 22.500 29 V33 H13.500 V30.500 C10.500 31.300 9.500 29.500 8.800 28 C8.400 27.200 7.500 26.800 7.500 26.300 C9 25.800 10 27 10.800 28 C11.500 28.800 12.500 28.800 13.500 28.400 C13.600 27.400 14 26.600 14.500 26 C12 25.500 8.500 24 8.500 19 C8.500 17 9 15.300 10.400 13.800 C10 12.500 10 11 11 9 Z" fill="#fff"/></svg>
<div class="abs" style="left:980px;top:1077px;width:61px;height:3px;background:#a9a9a9"></div>
<svg class="abs" style="left:991px;top:1032px" width="37" height="36" viewBox="0 0 37 36"><path d="M2 5 L12 0 L30 4 L37 17 L33 31 L22 36 L4 28 L0 14 Z" fill="#9a4fd6"/><path d="M2 5 L12 0 L18 10 L4 28 L0 14 Z" fill="#d345b8"/><path d="M30 4 L37 17 L33 31 L22 36 L26 18 Z" fill="#7a4fe0"/><rect x="7" y="7" width="22" height="22" fill="#0a0a0a"/><text x="9" y="19.500" font-family="Liberation Sans" font-weight="700" font-size="12.500" fill="#fff">PS</text><rect x="9.500" y="24" width="8" height="1.800" fill="#fff"/></svg>
<svg class="abs" style="left:1067px;top:1032px" width="36" height="36" viewBox="0 0 36 36"><path d="M25.500 9 L4 25.500" stroke="#0a6db8" stroke-width="5.500" stroke-linecap="round"/><path d="M25.500 27 L4 10.500" stroke="#1f9cf0" stroke-width="5.500" stroke-linecap="round"/><path d="M26 .3 L34.500 4.300 C35.500 4.800 36 5.500 36 6.500 V29.500 C36 30.500 35.500 31.200 34.500 31.700 L26 35.700 C25 36 24.500 35.500 24 35 L27 32 V4 L24 1 C24.500 .5 25 0 26 .3 Z" fill="#2aaaf5"/><path d="M27 10.500 L16 18 L27 25.500 Z" fill="#1d1d1d"/><path d="M24 1 L27 4 V10.800 L21 15 L17.500 12.300 Z" fill="#1587d6"/><path d="M24 35 L27 32 V25.200 L21 21 L17.500 23.700 Z" fill="#1f9cf0"/></svg>
<svg class="abs" style="left:1142px;top:1033px" width="36" height="33" viewBox="0 0 36 33"><rect x="8" y="0" width="27" height="33" rx="1.800" fill="#ca64ea"/><rect x="27" y="0" width="8" height="8.250" fill="#e3a2f5"/><rect x="27" y="8.250" width="8" height="8.250" fill="#ca64ea"/><rect x="27" y="16.500" width="8" height="8.250" fill="#ae4bd5"/><rect x="27" y="24.750" width="8" height="8.250" fill="#9332bf"/><rect x="0" y="7" width="19" height="19" rx="1.800" fill="#7719aa"/><path d="M5.500 21.500 V11.500 H7.800 L11.800 18 V11.500 H13.800 V21.500 H11.600 L7.500 15 V21.500 Z" fill="#fff"/></svg>
<div class="abs" style="left:1205px;top:1077px;width:61px;height:3px;background:#a9a9a9"></div>
<svg class="abs" style="left:1217px;top:1032px" width="34" height="34" viewBox="0 0 34 34"><defs><clipPath id="hsc"><circle cx="17" cy="17" r="17"/></clipPath><linearGradient id="hsg" x1="0" y1="0" x2="0" y2="1"><stop offset="0" stop-color="#7fd13b"/><stop offset="1" stop-color="#3f9a14"/></linearGradient></defs><g clip-path="url(#hsc)"><rect width="34" height="34" fill="#e8e8e2"/><rect width="34" height="17" fill="url(#hsg)"/><rect y="9.500" width="34" height="14" fill="#d9a520"/><rect y="23.500" width="34" height="12" fill="#e6e6dc"/></g><text x="17" y="21.500" text-anchor="middle" font-family="Liberation Sans" font-weight="700" font-size="13.500" fill="#1a1a1a">HS</text></svg>
<div class="t" style="left:1414.500px;top:1033.100px;font-size:15px;color:#fff;letter-spacing:.7px">U:</div>
<div class="t" style="left:1414.500px;top:1054.100px;font-size:15px;color:#fff;letter-spacing:.7px">D:</div>
<div class="t" style="left:1455.7px;top:1033.4px;font-size:14.5px;color:#fff;letter-spacing:0.2px">0.001</div>
<div class="t" style="left:1498.5px;top:1033.4px;font-size:14.5px;color:#fff;letter-spacing:1.44px">Mbit/s</div>
<div class="t" style="left:1455.7px;top:1054.4px;font-size:14.5px;color:#fff;letter-spacing:0.82px">0.000</div>
<div class="t" style="left:1498.5px;top:1054.4px;font-size:14.5px;color:#fff;letter-spacing:1.44px">Mbit/s</div>
<div class="t" style="left:1762.1px;top:1028.4px;font-size:17.3px;color:#fff;letter-spacing:-0.32px">18:43</div>
<div class="t" style="left:1738.1px;top:1055.9px;font-size:17.3px;color:#fff;letter-spacing:0.39px">15-01-2020</div>
<svg class="abs" style="left:1554px;top:1043px" width="21" height="13" viewBox="0 0 21 13"><path d="M1.500 11.500 L10.500 2 L19.500 11.500" fill="none" stroke="#fff" stroke-width="1.600"/></svg>
<svg class="abs" style="left:1587px;top:1041px" width="26" height="18" viewBox="0 0 26 18"><path d="M6 17 C2.500 17 .5 15 .5 12.500 C.5 10 2.500 8.300 5 8.300 C5.500 4.500 8.500 1.500 12.500 1.500 C16 1.500 18.500 3.500 19.500 6.500 C23 6.500 25.500 8.800 25.500 12 C25.500 15 23.500 17 20.500 17 Z" fill="#e6e6e6"/><path d="M5 8.300 C7 8.300 9 9 10.500 10.500 L19.500 6.500" stroke="#a8a8a8" stroke-width="1" fill="none"/></svg>
<svg class="abs" style="left:1627px;top:1041px" width="21" height="20" viewBox="0 0 21 20"><g fill="none" stroke="#fff" stroke-width="1.500"><path d="M1 19 A19 18 0 0 1 19.500 1.500"/><path d="M6 19 A14 13 0 0 1 19.500 6.500"/><path d="M11 19 A9 8 0 0 1 19.500 11.500"/></g><circle cx="18" cy="17.500" r="1.900" fill="#fff"/></svg>
<svg class="abs" style="left:1660px;top:1040px" width="23" height="20" viewBox="0 0 23 20"><path d="M1 6.500 H4.500 L9.500 1.500 V18.500 L4.500 13.500 H1 Z" fill="none" stroke="#fff" stroke-width="1.400"/><path d="M13.500 6.500 L21 14 M21 6.500 L13.500 14" stroke="#fff" stroke-width="1.400"/></svg>
<svg class="abs" style="left:1696px;top:1042px" width="26" height="20" viewBox="0 0 26 20"><rect x="1" y="2.500" width="20.500" height="12" fill="none" stroke="#fff" stroke-width="1.500"/><rect x="22" y="6" width="2" height="5" fill="#fff"/><rect x="3" y="4.500" width="9" height="8" fill="#fff"/><circle cx="18" cy="13.500" r="6" fill="#1a9c3c"/><path d="M18 9.500 C15.500 12 15.500 15 18 17 C20.500 15 20.500 12 18 9.500 Z M18 10 V17.500" stroke="#fff" stroke-width="1" fill="none"/></svg>
<svg class="abs" style="left:1858px;top:1037px" width="26" height="26" viewBox="0 0 26 26"><path d="M0 0 H24 V18 H10 L5 23 V18 H0 Z" fill="#fff"/><path d="M4 5 H20 M4 9 H20 M4 13 H16" stroke="#1d1d1d" stroke-width="1.300"/><circle cx="20" cy="19" r="5.500" fill="#1d1d1d"/><path d="M22.500 15 A4.700 4.700 0 1 0 24.500 21 A3.800 3.800 0 0 1 22.500 15 Z" fill="#fff"/></svg>
<div class="abs" style="left:1911.800px;top:1020px;width:1.600px;height:60px;background:#6f6f6f"></div>
</div>
</body>
</html>
